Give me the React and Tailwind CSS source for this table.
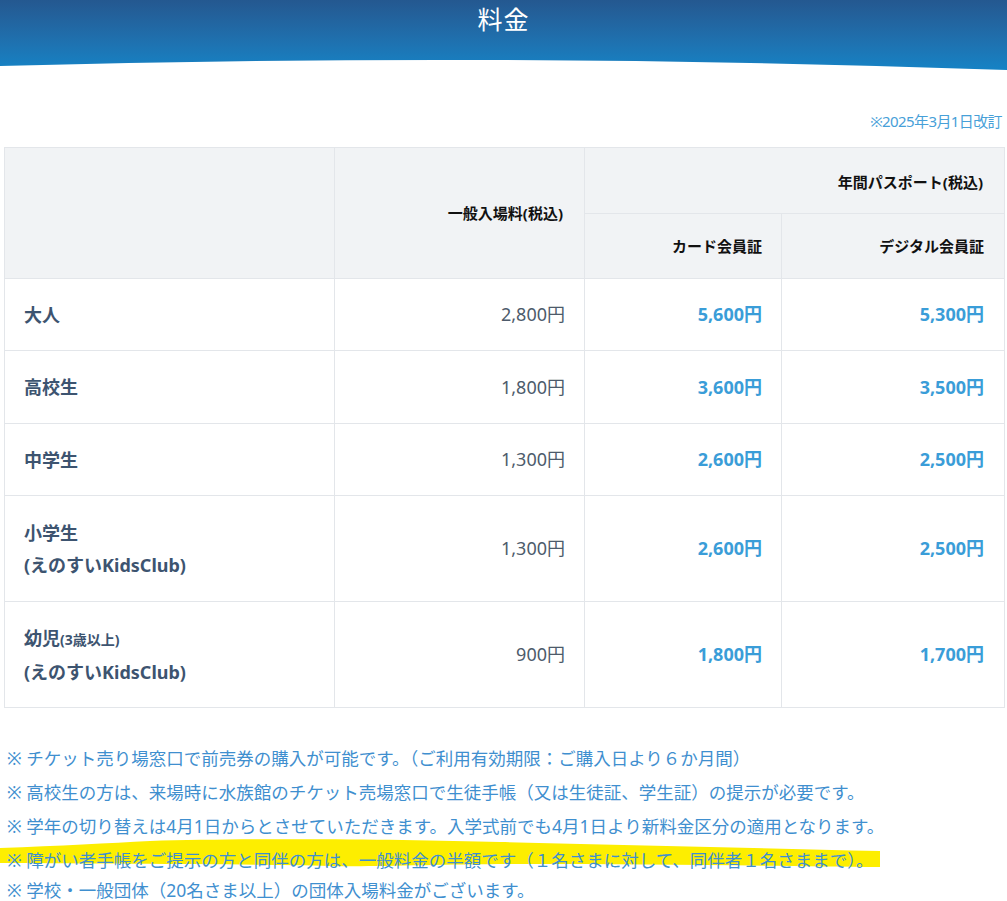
import React from "react";

const rows = [
  { label: [<span key="a">大人</span>], general: "2,800円", card: "5,600円", digital: "5,300円", h: "h-[72px]" },
  { label: [<span key="a">高校生</span>], general: "1,800円", card: "3,600円", digital: "3,500円", h: "h-[73px]" },
  { label: [<span key="a">中学生</span>], general: "1,300円", card: "2,600円", digital: "2,500円", h: "h-[72px]" },
  {
    label: [<span key="a">小学生</span>, <span key="b">(えのすいKidsClub)</span>],
    general: "1,300円", card: "2,600円", digital: "2,500円", h: "h-[106px]",
  },
  {
    label: [
      <span key="a">幼児<span className="text-[14px]">(3歳以上)</span></span>,
      <span key="b">(えのすいKidsClub)</span>,
    ],
    general: "900円", card: "1,800円", digital: "1,700円", h: "h-[106px]",
  },
];

const notes = [
  "※ チケット売り場窓口で前売券の購入が可能です。（ご利用有効期限：ご購入日より６か月間）",
  "※ 高校生の方は、来場時に水族館のチケット売場窓口で生徒手帳（又は生徒証、学生証）の提示が必要です。",
  "※ 学年の切り替えは4月1日からとさせていただきます。入学式前でも4月1日より新料金区分の適用となります。",
  "※ 障がい者手帳をご提示の方と同伴の方は、一般料金の半額です（１名さまに対して、同伴者１名さままで）。",
  "※ 学校・一般団体（20名さま以上）の団体入場料金がございます。",
];

const font = { fontFamily: '"Noto Sans", "Noto Sans CJK JP", sans-serif' };

export default function App() {
  return (
    <div className="w-[1007px] h-[901px] bg-white overflow-hidden" style={font}>
      {/* Header */}
      <div className="relative h-[80px] bg-gradient-to-b from-[#245890] to-[#0e89cd]">
        <h1 className="pt-[2px] text-center text-[25px] leading-[34px] font-normal text-white tracking-[1px]">料金</h1>
        <svg className="absolute left-0 bottom-0" width="1007" height="80" viewBox="0 0 1007 80" preserveAspectRatio="none">
          <path d="M0,66 Q500,52 1007,70 L1007,80 L0,80 Z" fill="#ffffff" />
        </svg>
      </div>

      {/* Revision date */}
      <div className="mt-[32px] pr-[5px] text-right text-[15px] leading-[19px] text-[#47a0d8] tracking-[-0.6px]">
        ※2025年3月1日改訂
      </div>

      {/* Table */}
      <div className="mt-[16px] ml-[4px] w-[1000px]">
        <table className="w-full border-collapse table-fixed">
          <colgroup>
            <col className="w-[330px]" />
            <col className="w-[250px]" />
            <col className="w-[197px]" />
            <col className="w-[223px]" />
          </colgroup>
          <thead>
            <tr className="h-[66px]">
              <th rowSpan={2} className="border border-[#e3e6ea] bg-[#f1f3f5]"></th>
              <th rowSpan={2} className="border border-[#e3e6ea] bg-[#f1f3f5] pr-[21px] text-right text-[15px] font-bold text-[#111]">
                一般入場料(税込)
              </th>
              <th colSpan={2} className="border border-[#e3e6ea] bg-[#f1f3f5] pr-[21px] pt-[4px] text-right text-[15px] font-bold text-[#111]">
                年間パスポート(税込)
              </th>
            </tr>
            <tr className="h-[65px]">
              <th className="border border-[#e3e6ea] bg-[#f1f3f5] pr-[19px] text-right text-[15px] font-bold text-[#111]">
                カード会員証
              </th>
              <th className="border border-[#e3e6ea] bg-[#f1f3f5] pr-[20px] text-right text-[15px] font-bold text-[#111]">
                デジタル会員証
              </th>
            </tr>
          </thead>
          <tbody>
            {rows.map((r, i) => (
              <tr key={i} className={r.h}>
                <td className="border border-[#e3e6ea] pl-[19px] text-[18px] leading-[32px] font-bold text-[#3d5470]">
                  <div className="flex flex-col">{r.label}</div>
                </td>
                <td className="border border-[#e3e6ea] pr-[19px] text-right text-[18px] text-[#4d5b6b]">{r.general}</td>
                <td className="border border-[#e3e6ea] pr-[19px] text-right text-[18px] font-bold text-[#3a9dd8]">{r.card}</td>
                <td className="border border-[#e3e6ea] pr-[20px] text-right text-[18px] font-bold text-[#3a9dd8]">{r.digital}</td>
              </tr>
            ))}
          </tbody>
        </table>
      </div>

      {/* Notes */}
      <div className="mt-[33px] pl-[7px] flex flex-col text-[17.5px] leading-[34px] text-[#3f8fcf]">
        {notes.map((n, i) =>
          i === 3 ? (
            <div key={i} className="relative">
              <svg className="absolute left-[-7px] top-[-6px]" width="885" height="36" viewBox="0 0 885 36">
                <path
                  d="M0,11 C60,9 110,6 150,4 C250,1 400,2 500,5 C620,8 760,11 880,14 L880,30 C780,29 650,27 520,27 C440,27 380,30 330,29 C250,27 120,27 0,26 Z"
                  fill="#fdee00"
                />
              </svg>
              <span className="relative">{n}</span>
            </div>
          ) : (
            <div key={i} className={i === 4 ? "-mt-[4px]" : ""}>{n}</div>
          )
        )}
      </div>
    </div>
  );
}
